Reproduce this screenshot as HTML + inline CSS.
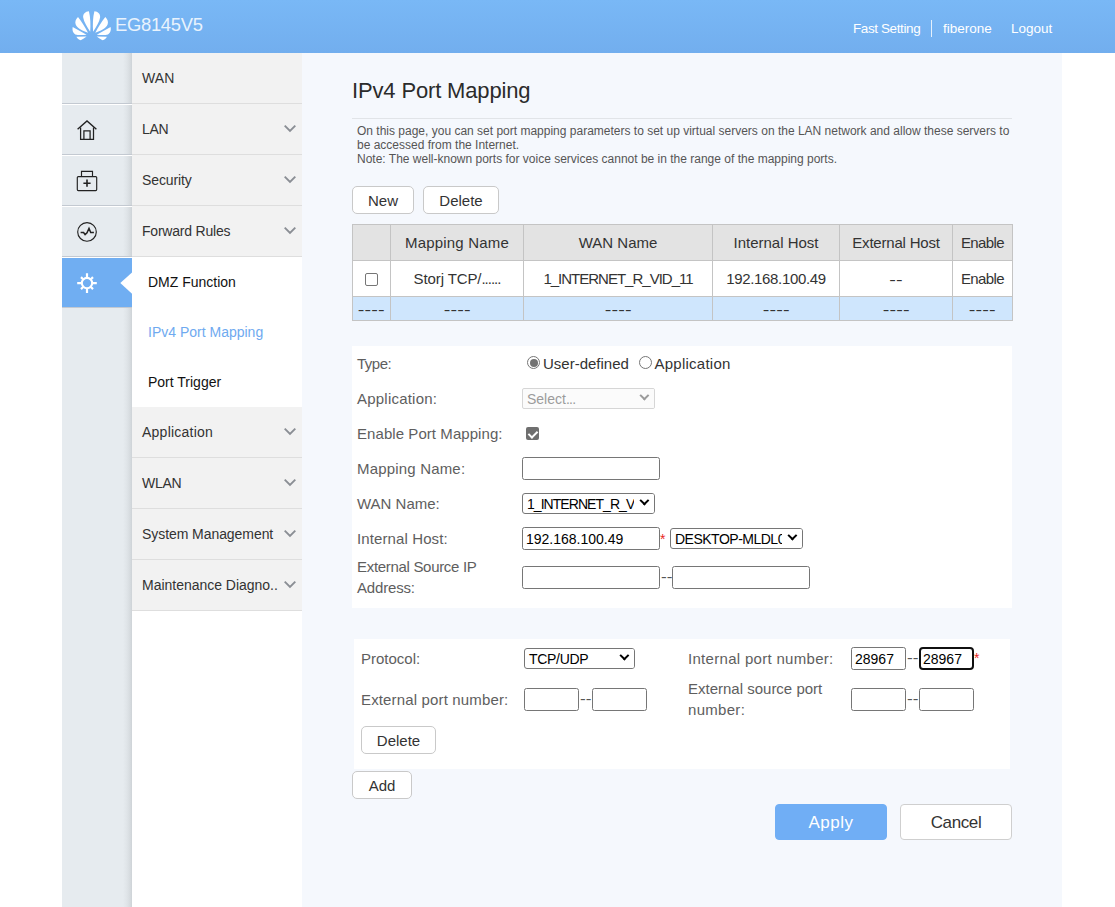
<!DOCTYPE html>
<html lang="en">
<head>
<meta charset="utf-8">
<title>EG8145V5</title>
<style>
*{box-sizing:border-box;margin:0;padding:0}
html,body{width:1115px;height:907px;overflow:hidden;background:#fff}
body{position:relative;font-family:"Liberation Sans","DejaVu Sans",sans-serif;color:#333;font-size:14px}
.abs{position:absolute}
#header{position:absolute;left:0;top:0;width:1115px;height:53px;background:linear-gradient(#79b8f6,#72aeee)}
#brand{position:absolute;left:115px;top:13px;font-size:18.4px;letter-spacing:-0.3px;line-height:24px;color:#e9f3fd;white-space:nowrap}
.toplink{position:absolute;top:21px;font-size:13.5px;line-height:16px;color:#fff;white-space:nowrap}
#topsep{position:absolute;left:931px;top:20px;width:1px;height:17px;background:#e4f0fc}
#iconcol{position:absolute;left:62px;top:53px;width:70px;height:854px;background:linear-gradient(90deg,#e6ebef 0,#e6ebef 61px,#dfe4e8 65px,#d3d8dc 69px,#cdd2d6 70px)}
.icell{position:absolute;left:0;width:70px;height:51px;border-top:1px solid #fff;border-bottom:1px solid #c3c9d1}
.icell:first-child{border-top-color:transparent}
.icell.on{background:#70aef2}
svg{position:absolute;overflow:visible}
#menucol{position:absolute;left:132px;top:53px;width:170px;height:854px;background:#fff}
.mitem{position:absolute;left:0;width:170px;height:51px;background:#f2f2f2;border-bottom:1px solid #dedede;padding-left:10px;line-height:51px;font-size:14px;color:#333;white-space:nowrap}
.sub{position:absolute;left:16px;font-size:14px;line-height:20px;color:#111;white-space:nowrap}
.chev{position:absolute;left:152px;top:21.4px}
#content{position:absolute;left:302px;top:53px;width:760px;height:854px;background:#f5f8fd}

#title{position:absolute;left:352px;top:77px;letter-spacing:-0.15px;font-size:22px;line-height:28px;color:#2b2b2b;white-space:nowrap}
#hr{position:absolute;left:352px;top:118px;width:660px;height:1px;background:#e1e4e8}
#desc{position:absolute;left:357px;top:124px;width:660px;font-size:12px;line-height:14px;color:#555;white-space:nowrap}
.btn{position:absolute;height:28px;border:1px solid #c9c9c9;border-radius:5px;background:#fff;color:#333;font-size:15px;line-height:27.5px;text-align:center;white-space:nowrap}
#tbl{position:absolute;left:352px;top:224px;width:660px;border-collapse:collapse;table-layout:fixed;font-size:15px;color:#333}
#tbl td{border:1px solid #c4c4c4;text-align:center;padding:0;white-space:nowrap;overflow:hidden}
#tbl tr.h td{height:36px;background:#e3e3e3}
#tbl tr.r td{height:36px;background:#fff}
#tbl tr.e td{height:24px;background:#cfe6fd}
#tbl .ds{display:inline-block;transform:scaleX(1.32);letter-spacing:0.1px;position:relative;top:0.7px}
.panel{position:absolute;background:#fff}
.lbl{position:absolute;font-size:15px;line-height:21px;color:#5e5e5e;white-space:nowrap}
.inp{position:absolute;height:22.5px;border:1px solid #767676;border-radius:2.5px;background:#fff;font-size:14px;line-height:22px;color:#000;padding-left:3px;white-space:nowrap;overflow:hidden}
.sel{position:absolute;height:21px;border:1px solid #767676;border-radius:3px;background:#fff;font-size:14px;line-height:21px;color:#000;padding-left:4px;white-space:nowrap;overflow:hidden}
.dd{position:absolute;font-size:14px;line-height:20px;color:#555;transform:scaleX(1.22);transform-origin:0 0}
.radio{position:absolute;width:13px;height:13px;border:1px solid #767676;border-radius:50%;background:#fff}
.radio.on:after{content:"";position:absolute;left:1.5px;top:1.5px;width:8px;height:8px;border-radius:50%;background:#727272}
.chk{position:absolute;width:13px;height:13px;border-radius:2px;background:#6f6f6f}
.chk:after{content:"";position:absolute;left:4px;top:1.5px;width:4px;height:7px;border:solid #fff;border-width:0 2px 2px 0;transform:rotate(45deg)}
.cb{position:relative;top:-1px;display:inline-block;width:13px;height:13px;border:1px solid #767676;border-radius:2px;background:#fff;vertical-align:middle}
.sel:before{content:"";position:absolute;right:0;top:0;width:20px;height:19px;background:#fff}
.sel:after{content:"";position:absolute;right:5.9px;top:3.2px;width:4.8px;height:4.8px;border:solid #000;border-width:0 2px 2px 0;transform:rotate(45deg)}
.sel.dis{border-color:#d6d6d6;color:#9b9b9b;background:#fbfbfb;border-radius:2px}
.sel.dis:before{background:#fbfbfb}
.sel.dis:after{border-color:#9b9b9b}
.inp.foc{border:2px solid #101010;border-radius:4px;padding-left:2px;line-height:20px}
.bigbtn{position:absolute;top:804px;width:112px;height:36px;border:1px solid #cfcfcf;border-radius:4px;background:#fff;color:#333;font-size:17px;line-height:36px;text-align:center}
.star{position:absolute;font-size:14px;line-height:20px;color:#e8281e}
</style>
</head>
<body>
<div id="header">
  <svg id="logo" style="left:68px;top:6px" width="48" height="40" viewBox="0 0 48 40" fill="#fff">
<g id="pr"><path d="M26.4,5.2 C30,5.5 32.6,8 32.1,11.5 C31.5,16 28,21 25.1,25.8 C24.6,19 24.8,11 26.4,5.2 Z"/>
<path d="M37.3,11 C39.5,13 40.6,16 39.6,18.5 C38,22.5 32,25 27.3,26.8 C30,21.5 33.5,16 37.3,11 Z"/>
<path d="M42.6,21 C43.3,24 42.5,27 40,28.4 C37,29.3 32,28.9 28.7,28.7 Z"/>
<path d="M28.7,30.4 L38.9,30.8 C38,32.5 36.5,33.8 34.6,34.2 C32.5,33 30.5,31.8 28.7,30.4 Z"/></g>
<g transform="translate(47.3,0) scale(-1,1)"><path d="M26.4,5.2 C30,5.5 32.6,8 32.1,11.5 C31.5,16 28,21 25.1,25.8 C24.6,19 24.8,11 26.4,5.2 Z"/>
<path d="M37.3,11 C39.5,13 40.6,16 39.6,18.5 C38,22.5 32,25 27.3,26.8 C30,21.5 33.5,16 37.3,11 Z"/>
<path d="M42.6,21 C43.3,24 42.5,27 40,28.4 C37,29.3 32,28.9 28.7,28.7 Z"/>
<path d="M28.7,30.4 L38.9,30.8 C38,32.5 36.5,33.8 34.6,34.2 C32.5,33 30.5,31.8 28.7,30.4 Z"/></g>
</svg>
  <div id="brand">EG8145V5</div>
  <div class="toplink" style="left:853px;letter-spacing:-0.4px">Fast Setting</div>
  <div id="topsep"></div>
  <div class="toplink" style="left:943px">fiberone</div>
  <div class="toplink" style="left:1011px">Logout</div>
</div>
<div id="iconcol">
  <div class="icell" style="top:0"></div>
  <div class="icell" style="top:51px"></div>
  <div class="icell" style="top:102px"></div>
  <div class="icell" style="top:153px"></div>
  <div class="icell on" style="top:204px"></div>
</div>

<svg style="left:62px;top:104px" width="70" height="50" viewBox="0 0 70 50" fill="none" stroke="#222" stroke-width="1.25">
<path d="M15.6,25.2 L25,16.9 L34.4,25.2" stroke-width="1.4"/><path d="M18.6,23.6 V35.4 H31.5 V23.6"/><path d="M21.9,35.2 V26.8 H28.1 V35.2"/></svg>
<svg style="left:62px;top:155px" width="70" height="50" viewBox="0 0 70 50" fill="none" stroke="#222" stroke-width="1.15">
<rect x="15.3" y="21.6" width="19.4" height="14" rx="1"/><path d="M19.5,21.6 V16.4 H30.5 V21.6"/><path d="M21.4,28.2 H28.6 M25,24.6 V31.8" stroke-width="1.6"/></svg>
<svg style="left:62px;top:206px" width="70" height="50" viewBox="0 0 70 50" fill="none" stroke="#222" stroke-width="1.15">
<circle cx="25" cy="25.9" r="9.3"/><path d="M18.6,26.5 H21.6 L23.1,28.7 L25,26.8 L27,22.3 L28.7,26.5 H31.9" stroke-width="1.5"/></svg>
<svg style="left:62px;top:257px" width="70" height="51" viewBox="0 0 70 51" fill="none" stroke="#fff" stroke-width="1.9">
<circle cx="25" cy="26.1" r="5.2" stroke-width="2.1"/><path stroke-width="2.2" d="M25,16.3 V20.6 M25,31.6 V35.9 M15.2,26.1 H19.5 M30.5,26.1 H34.8 M19,20.1 L21.1,22.2 M28.9,30 L31,32.1 M19,32.1 L21.1,30 M28.9,22.2 L31,20.1"/>
<path d="M70,15.4 L58.3,26.1 L70,36.8 Z" fill="#fff" stroke="none"/></svg>
<div id="menucol">
  <div class="mitem" style="top:0;letter-spacing:0.13px">WAN</div>
  <div class="mitem" style="top:51px;letter-spacing:-0.3px">LAN<svg class="chev" width="12" height="7" viewBox="0 0 12 7" fill="none" stroke="#8a8e94" stroke-width="1.9"><path d="M0.7,0.6 L6,5.9 L11.3,0.6"/></svg></div>
  <div class="mitem" style="top:102px;letter-spacing:-0.11px">Security<svg class="chev" width="12" height="7" viewBox="0 0 12 7" fill="none" stroke="#8a8e94" stroke-width="1.9"><path d="M0.7,0.6 L6,5.9 L11.3,0.6"/></svg></div>
  <div class="mitem" style="top:153px;letter-spacing:-0.21px">Forward Rules<svg class="chev" width="12" height="7" viewBox="0 0 12 7" fill="none" stroke="#8a8e94" stroke-width="1.9"><path d="M0.7,0.6 L6,5.9 L11.3,0.6"/></svg></div>
  <div class="sub" style="top:219px">DMZ Function</div>
  <div class="sub" style="top:269px;color:#6faaf0">IPv4 Port Mapping</div>
  <div class="sub" style="top:319px">Port Trigger</div>
  <div class="mitem" style="top:354px;letter-spacing:0.24px">Application<svg class="chev" width="12" height="7" viewBox="0 0 12 7" fill="none" stroke="#8a8e94" stroke-width="1.9"><path d="M0.7,0.6 L6,5.9 L11.3,0.6"/></svg></div>
  <div class="mitem" style="top:405px;letter-spacing:-0.25px">WLAN<svg class="chev" width="12" height="7" viewBox="0 0 12 7" fill="none" stroke="#8a8e94" stroke-width="1.9"><path d="M0.7,0.6 L6,5.9 L11.3,0.6"/></svg></div>
  <div class="mitem" style="top:456px;letter-spacing:-0.065px">System Management<svg class="chev" width="12" height="7" viewBox="0 0 12 7" fill="none" stroke="#8a8e94" stroke-width="1.9"><path d="M0.7,0.6 L6,5.9 L11.3,0.6"/></svg></div>
  <div class="mitem" style="top:507px;letter-spacing:-0.02px">Maintenance Diagno..<svg class="chev" width="12" height="7" viewBox="0 0 12 7" fill="none" stroke="#8a8e94" stroke-width="1.9"><path d="M0.7,0.6 L6,5.9 L11.3,0.6"/></svg></div>
</div>
<div id="content"></div>
<div id="title">IPv4 Port Mapping</div>
<div id="hr"></div>
<div id="desc">On this page, you can set port mapping parameters to set up virtual servers on the LAN network and allow these servers to<br>be accessed from the Internet.<br>Note: The well-known ports for voice services cannot be in the range of the mapping ports.</div>
<div class="btn" style="left:352px;top:186px;width:62px">New</div>
<div class="btn" style="left:423px;top:186px;width:76px">Delete</div>
<table id="tbl">
<colgroup><col style="width:38px"><col style="width:133px"><col style="width:189px"><col style="width:127px"><col style="width:113px"><col style="width:60px"></colgroup>
<tr class="h"><td></td><td style="letter-spacing:0.2px">Mapping Name</td><td>WAN Name</td><td>Internal Host</td><td style="letter-spacing:-0.2px">External Host</td><td style="letter-spacing:-0.6px">Enable</td></tr>
<tr class="r"><td><span class="cb"></span></td><td style="letter-spacing:-0.1px">Storj TCP/<span style="letter-spacing:-1px">......</span></td><td style="letter-spacing:-1px">1_INTERNET_R_VID_11</td><td style="letter-spacing:-0.35px">192.168.100.49</td><td><span class="ds">--</span></td><td style="letter-spacing:-0.6px">Enable</td></tr>
<tr class="e"><td><span class="ds">----</span></td><td><span class="ds">----</span></td><td><span class="ds">----</span></td><td><span class="ds">----</span></td><td><span class="ds">----</span></td><td><span class="ds">----</span></td></tr>
</table>

<div class="panel" style="left:352px;top:346px;width:660px;height:262px"></div>
<div class="lbl" style="left:357px;top:353px;letter-spacing:-0.48px">Type:</div>
<div class="lbl" style="left:357px;top:388px;letter-spacing:0.22px">Application:</div>
<div class="lbl" style="left:357px;top:423px;letter-spacing:0.065px">Enable Port Mapping:</div>
<div class="lbl" style="left:357px;top:458px;letter-spacing:0.18px">Mapping Name:</div>
<div class="lbl" style="left:357px;top:493px">WAN Name:</div>
<div class="lbl" style="left:357px;top:528px;letter-spacing:0.11px">Internal Host:</div>
<div class="lbl" style="left:357px;top:556px"><span style="letter-spacing:-0.31px">External Source IP</span><br><span style="letter-spacing:-0.17px">Address:</span></div>

<div class="radio on" style="left:527px;top:356px"></div>
<div class="lbl" style="left:543px;top:353px;color:#333">User-defined</div>
<div class="radio" style="left:639px;top:356px"></div>
<div class="lbl" style="left:654.5px;top:353px;color:#333;letter-spacing:0.25px">Application</div>
<div class="sel dis" style="left:522px;top:388px;width:133px">Select<span style="letter-spacing:-0.7px">...</span></div>
<div class="chk" style="left:526px;top:427px"></div>
<div class="inp" style="left:522px;top:457px;width:138px"></div>
<div class="sel" style="left:522px;top:493px;width:133px;letter-spacing:-0.95px">1_INTERNET_R_V</div>
<div class="inp" style="left:522px;top:527px;width:138px">192.168.100.49</div>
<div class="star" style="left:660px;top:529px">*</div>
<div class="sel" style="left:670px;top:528px;width:133px;letter-spacing:-0.5px">DESKTOP-MLDL0</div>
<div class="inp" style="left:522px;top:566px;width:138px"></div>
<div class="dd" style="left:661px;top:567px">--</div>
<div class="inp" style="left:672px;top:566px;width:138px"></div>

<div class="panel" style="left:354px;top:639px;width:656px;height:130px"></div>
<div class="lbl" style="left:361px;top:648px">Protocol:</div>
<div class="sel" style="left:524px;top:648px;width:111px;letter-spacing:-0.3px">TCP/UDP</div>
<div class="lbl" style="left:688px;top:648px;letter-spacing:0.3px">Internal port number:</div>
<div class="inp" style="left:851px;top:647px;width:55px">28967</div>
<div class="dd" style="left:907px;top:648px">--</div>
<div class="inp foc" style="left:919px;top:647px;width:55px">28967</div>
<div class="star" style="left:974px;top:648px">*</div>
<div class="lbl" style="left:361px;top:689px;letter-spacing:0.15px">External port number:</div>
<div class="inp" style="left:524px;top:688px;width:55px"></div>
<div class="dd" style="left:580px;top:689px">--</div>
<div class="inp" style="left:592px;top:688px;width:55px"></div>
<div class="lbl" style="left:688px;top:678px">External source port<br><span style="letter-spacing:0.3px">number:</span></div>
<div class="inp" style="left:851px;top:688px;width:55px"></div>
<div class="dd" style="left:907px;top:689px">--</div>
<div class="inp" style="left:919px;top:688px;width:55px"></div>
<div class="btn" style="left:361px;top:726px;width:75px">Delete</div>
<div class="btn" style="left:352px;top:771px;width:60px">Add</div>
<div class="bigbtn" style="left:775px;background:#70aef5;color:#fff;border-color:#70aef5;letter-spacing:0.5px">Apply</div>
<div class="bigbtn" style="left:900px;letter-spacing:-0.4px">Cancel</div>

</body>
</html>
